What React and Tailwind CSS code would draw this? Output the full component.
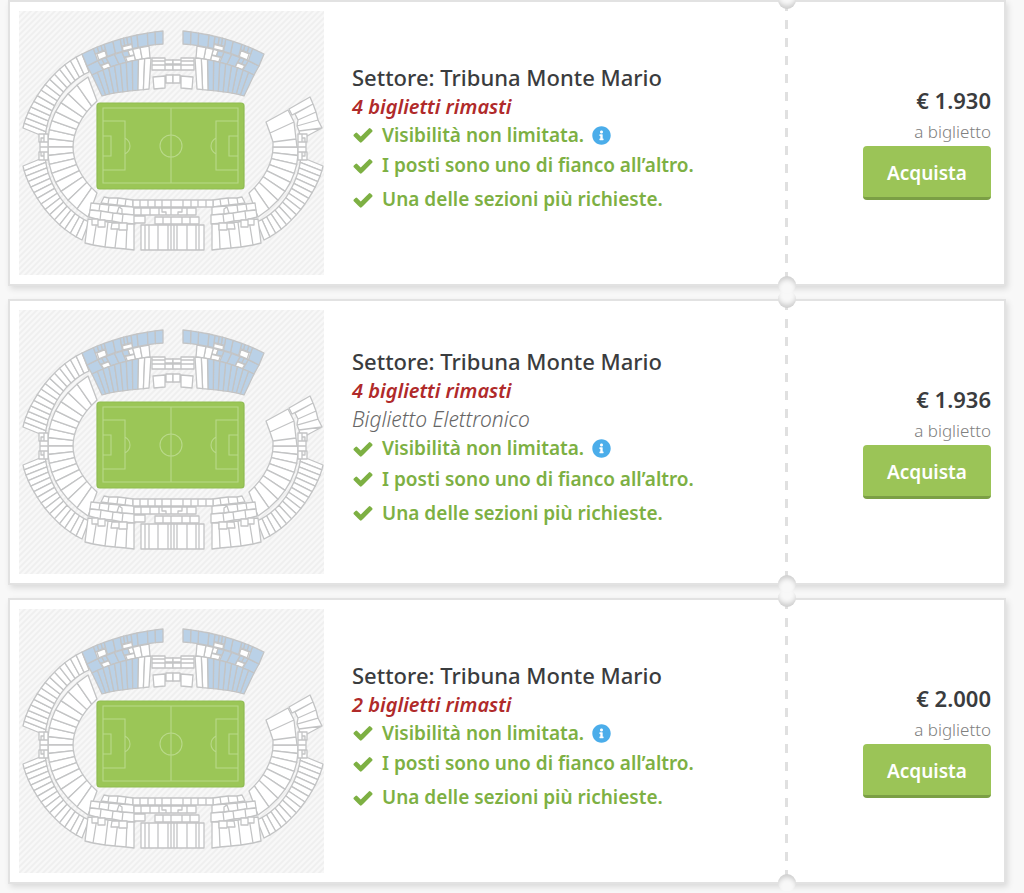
// src/App.jsx
import React from "react";
import { FaInfoCircle } from "react-icons/fa";

const TICKETS = [
  { id: 1, sector: "Tribuna Monte Mario", left: 4, price: "1.930", electronic: false },
  { id: 2, sector: "Tribuna Monte Mario", left: 4, price: "1.936", electronic: true },
  { id: 3, sector: "Tribuna Monte Mario", left: 2, price: "2.000", electronic: false },
];

const BLUE = "#bad1e7";
const WHITE = "#ffffff";

// A band is two cubic curves (outer, inner) that the seat blocks sit between.
const OUTER_TIER = {
  outer: [[23, 128], [28, 104], [52, 68], [82, 54]],
  inner: [[45, 137], [48, 110], [64, 83], [89, 72]],
};
const INNER_TIER = {
  outer: [[48, 147], [47, 125], [56, 98], [88, 77]],
  inner: [[73, 147], [73, 132], [82, 114], [97, 101]],
};
const TOP_ROW = {
  outer: [[82, 54], [105, 42], [134, 34], [163, 31]],
  inner: [[87, 66], [108, 54], [135, 46], [163, 44]],
};
const SECOND_ROW = {
  outer: [[87, 66], [104, 57], [126, 50], [149, 46]],
  inner: [[92, 75], [110, 66], [130, 60], [150, 58]],
};
const STRIPES = {
  outer: [[92, 75], [110, 66], [130, 60], [151, 58]],
  inner: [[102, 96], [114, 92], [130, 91], [149, 89]],
};

function pointAt([a, b, c, d], t) {
  const u = 1 - t;
  return [0, 1].map(
    (i) => u * u * u * a[i] + 3 * u * u * t * b[i] + 3 * u * t * t * c[i] + t * t * t * d[i]
  );
}

function cellPoints(band, t0, t1, v0 = 0, v1 = 1) {
  const at = (t, v) => {
    const o = pointAt(band.outer, t);
    const n = pointAt(band.inner, t);
    return [o[0] + (n[0] - o[0]) * v, o[1] + (n[1] - o[1]) * v];
  };
  return [at(t0, v0), at(t1, v0), at(t1, v1), at(t0, v1)]
    .map(([x, y]) => `${x.toFixed(1)},${y.toFixed(1)}`)
    .join(" ");
}

function Cells({ band, count, fill = WHITE }) {
  return Array.from({ length: count }, (_, i) => (
    <polygon
      key={i}
      points={cellPoints(band, i / count, (i + 1) / count)}
      fill={typeof fill === "function" ? fill(i) : fill}
    />
  ));
}

// [t0, t1, v0, v1, fill]
const TOP_CELLS = [
  [0, 0.16, 0, 1, BLUE],
  [0.16, 0.21, 0, 0.45, BLUE],
  [0.21, 0.26, 0, 0.45, BLUE],
  [0.26, 0.3, 0, 0.45, BLUE],
  [0.18, 0.29, 0.5, 1, WHITE],
  [0.3, 0.41, 0, 1, BLUE],
  [0.41, 0.5, 0, 1, BLUE],
  [0.5, 0.54, 0, 0.6, BLUE],
  [0.54, 0.58, 0, 0.6, BLUE],
  [0.58, 0.63, 0, 0.6, BLUE],
  [0.51, 0.63, 0.65, 1, WHITE],
  [0.63, 0.7, 0, 1, BLUE],
  [0.7, 0.82, 0, 1, BLUE],
  [0.82, 0.91, 0, 1, BLUE],
  [0.91, 1, 0, 1, BLUE],
];
const SECOND_CELLS = [
  [0, 0.2, 0, 1, BLUE],
  [0.2, 0.27, 0, 0.5, BLUE],
  [0.27, 0.34, 0, 0.5, BLUE],
  [0.21, 0.34, 0.55, 1, WHITE],
  [0.34, 0.48, 0, 1, BLUE],
  [0.48, 0.6, 0, 1, BLUE],
  [0.6, 0.69, 0, 0.5, BLUE],
  [0.69, 0.76, 0, 0.5, WHITE],
  [0.62, 0.76, 0.55, 1, WHITE],
  [0.76, 0.87, 0, 1, WHITE],
  [0.87, 1, 0, 1, WHITE],
];

function MainStand() {
  return (
    <g>
      {SECOND_CELLS.map(([t0, t1, v0, v1, fill], i) => (
        <polygon key={`s${i}`} points={cellPoints(SECOND_ROW, t0, t1, v0, v1)} fill={fill} />
      ))}
      {TOP_CELLS.map(([t0, t1, v0, v1, fill], i) => (
        <polygon key={`t${i}`} points={cellPoints(TOP_ROW, t0, t1, v0, v1)} fill={fill} />
      ))}
      <Cells band={STRIPES} count={10} fill={(i) => (i < 8 ? BLUE : WHITE)} />
      <path
        fill={WHITE}
        d="M152 58h13v3h-13z M152 61h13v4h-13z M152 65h13v5h-13z M165 60h8v4h-8z M165 65h8v5h-8z M153 77l12 -1v12l-11 1z M166 75h7v8h-7z"
      />
    </g>
  );
}

function BottomCorner() {
  return (
    <g fill={WHITE}>
      <path d="M104 197l5 1-1 6-7-1z M109 198h9l-1 7-9-1z M118 198l8 1-1 7-8-1z M126 199l7 1v7l-8-1z" />
      <path d="M91 203l9 1-1 7-9-1z M100 204l9 1-1 8-9-2z M109 205l11 1-1 8-11-1z M120 206l14 1v8l-15-1z" />
      <path d="M90 210l11 1-1 9-11-3z M101 211l12 2-1 8-12-1z M113 213l10 1-1 9-10-2z M123 214l12 1v9l-13-1z" />
      <path d="M88 219l9 1-4 25-8-2z M97 220l11 2-3 25-12-2z M108 222l10 1-3 25-10-1z M118 223l9 1-1 25-11-1z M127 224h7v26l-8-1z" />
      <path d="M92 219h6v6h-6z M98 220h7v7h-7z M112 223h7v6h-8z M119 223h8v7h-8z M119 207l3 2v5l-5-1z" />
    </g>
  );
}

function SideGate() {
  return (
    <path
      fill={WHITE}
      d="M40 142h8v5h-8z M40 147h8v5h-8z M39 134h5v4h-3v4h-2z M44 134h4v8h-4z M39 160h5v-4h-3v-4h-2z M44 160h4v-8h-4z"
    />
  );
}

function Pitch() {
  return (
    <g>
      <rect x="97" y="103" width="147" height="86" rx="3" fill="#9bc657" stroke="#8fbc51" strokeWidth="1.2" />
      <g fill="none" stroke="#b9d98a" strokeWidth="1.1">
        <path d="M103 108h135v75h-135z M171 108v75" />
        <path d="M103 121h22v49h-22 M103 136h8v20h-8 M125 138q5 3 5 8t-5 8" />
        <path d="M238 121h-22v49h22 M238 136h-9v20h9 M216 138q-5 3-5 8t5 8" />
        <circle cx="171" cy="146" r="11" />
      </g>
    </g>
  );
}

const flipX = "translate(346 0) scale(-1 1)";
const flipY = "translate(0 294) scale(1 -1)";

function StadiumMap({ id }) {
  const hatch = `hatch-${id}`;
  return (
    <svg viewBox="19 11 305 264" className="h-[264px] w-[305px] shrink-0" aria-hidden="true">
      <defs>
        <pattern id={hatch} width="6" height="6" patternUnits="userSpaceOnUse">
          <rect width="6" height="6" fill="#f8f8f8" />
          <path d="M-1 1l2-2 M0 6l6-6 M5 7l2-2" stroke="#efefef" strokeWidth="1.8" />
        </pattern>
      </defs>
      <rect x="19" y="11" width="305" height="264" fill={`url(#${hatch})`} />
      <g stroke="#c3c4c5" strokeWidth="1.3" strokeLinejoin="round">
        <Cells band={OUTER_TIER} count={15} />
        <Cells band={INNER_TIER} count={8} />
        <g transform={flipY}>
          <Cells band={OUTER_TIER} count={15} />
          <Cells band={INNER_TIER} count={8} />
        </g>
        <g transform={`${flipX} ${flipY}`}>
          <Cells band={OUTER_TIER} count={15} />
          <Cells band={INNER_TIER} count={8} />
        </g>
        {/* right curve, open towards the main stand */}
        <path
          fill={WHITE}
          d="M289 109l21-12 3 7-21 11z M295 114l18-10 3 8-18 8z M298 120l18-8 2 8-21 6z M297 126l21-6 4 8-23 3z M299 131l23-3-15 8-7-1z"
        />
        <path
          fill={WHITE}
          d="M266 122l22-12 6 12-24 11z M270 133l24-11 2 17-23 3z M273 142l23-3 1 8h-24z"
        />
        <SideGate />
        <g transform={flipX}>
          <SideGate />
        </g>
        <MainStand />
        <g transform={flipX}>
          <MainStand />
        </g>
        <BottomCorner />
        <g transform={flipX}>
          <BottomCorner />
        </g>
        {/* lower stand, centre block */}
        <g fill={WHITE}>
          <path d="M133 200h80v7h-80z M134 208h62v7h-62z M155 217h44v7h-44z M134 216h11v7h-11z" />
          <path d="M141 225h63v25h-63z" />
        </g>
        <path
          fill="none"
          d="M140 200v7 M148 200v7 M155 200v7 M162 200v7 M171 200v7 M183 200v7 M191 200v7 M198 200v7 M206 200v7 M141 208v7 M150 208v7 M159 208v7 M162 208v4h4v3 M171 208v7 M178 215v-3h4v-4 M187 208v7 M163 217v7 M171 217v7 M182 217v7 M190 217v7 M145 225v25 M149 225v25 M158 225v25 M168 225v25 M171 225v25 M174 225v25 M177 225v25 M187 225v25 M196 225v25 M199 225v25"
        />
      </g>
      <Pitch />
    </svg>
  );
}

function CheckIcon() {
  return (
    <svg viewBox="0 0 1792 1792" className="size-[22px] shrink-0" fill="currentColor" aria-hidden="true">
      <path d="M1671 566q0 40-28 68l-724 724-136 136q-28 28-68 28t-68-28l-136-136-362-362q-28-28-28-68t28-68l136-136q28-28 68-28t68 28l294 295 656-657q28-28 68-28t68 28l136 136q28 28 28 68z" />
    </svg>
  );
}

function TicketCard({ ticket }) {
  return (
    <li className="relative flex border-2 border-[#e2e2e2] bg-white p-[9px] shadow-[2px_3px_6px_rgba(0,0,0,0.12)]">
      <StadiumMap id={ticket.id} />

      <div className="flex min-w-0 flex-1 flex-col justify-center pl-7">
        <h2 className="text-[22px] leading-[29px] font-medium text-[#3a3c3e]">
          Settore: {ticket.sector}
        </h2>
        <p className="text-xl leading-[29px] font-semibold text-[#b02a2a] italic">
          {ticket.left} biglietti rimasti
        </p>
        {ticket.electronic && (
          <p className="text-[21px] leading-[29px] font-light text-[#666666] italic">
            Biglietto Elettronico
          </p>
        )}
        <ul className="pb-1.5 text-[19px] font-semibold text-[#7db043]">
          <li className="flex h-[29px] items-center gap-2">
            <CheckIcon />
            Visibilità non limitata.
            <button type="button" className="text-[#4badea]" aria-label="Informazioni">
              <FaInfoCircle className="size-[19px]" />
            </button>
          </li>
          <li className="flex h-8 items-center gap-2">
            <CheckIcon />I posti sono uno di fianco all’altro.
          </li>
          <li className="flex h-9 items-center gap-2">
            <CheckIcon />
            Una delle sezioni più richieste.
          </li>
        </ul>
      </div>

      {/* Tear-off stub */}
      <div className="-my-[9px] w-[3px] shrink-0 bg-[repeating-linear-gradient(to_bottom,#e0e0e0_0,#e0e0e0_9px,transparent_9px,transparent_18px)]" />
      <span className="absolute -top-[11px] right-[208px] size-[18px] rounded-full bg-[#f8f8f8] shadow-[inset_0_-4px_5px_-1px_rgba(0,0,0,0.18)]" />
      <span className="absolute right-[208px] -bottom-[10px] z-10 size-[18px] rounded-full bg-[#f8f8f8] shadow-[inset_0_4px_5px_-1px_rgba(0,0,0,0.18)]" />

      <div className="flex w-[207px] shrink-0 flex-col items-end justify-center pr-1">
        <p className="pb-1 text-[22px] leading-7 font-semibold text-[#3a3c3e]">€ {ticket.price}</p>
        <p className="text-[17px] leading-7 font-light text-[#808080]">a biglietto</p>
        <button
          type="button"
          className="h-[54px] w-32 rounded-[4px] border-b-3 border-[#7b9f45] bg-[#9bc457] pt-1 text-[19px] font-semibold text-white hover:bg-[#8fb94c]"
        >
          Acquista
        </button>
      </div>
    </li>
  );
}

export default function App() {
  return (
    <main className="min-h-screen overflow-hidden bg-[#f8f8f8] pr-[18px] pb-2 pl-2 font-['Noto_Sans',sans-serif]">
      <ul className="flex flex-col gap-[13px]">
        {TICKETS.map((t) => (
          <TicketCard key={t.id} ticket={t} />
        ))}
      </ul>
    </main>
  );
}
